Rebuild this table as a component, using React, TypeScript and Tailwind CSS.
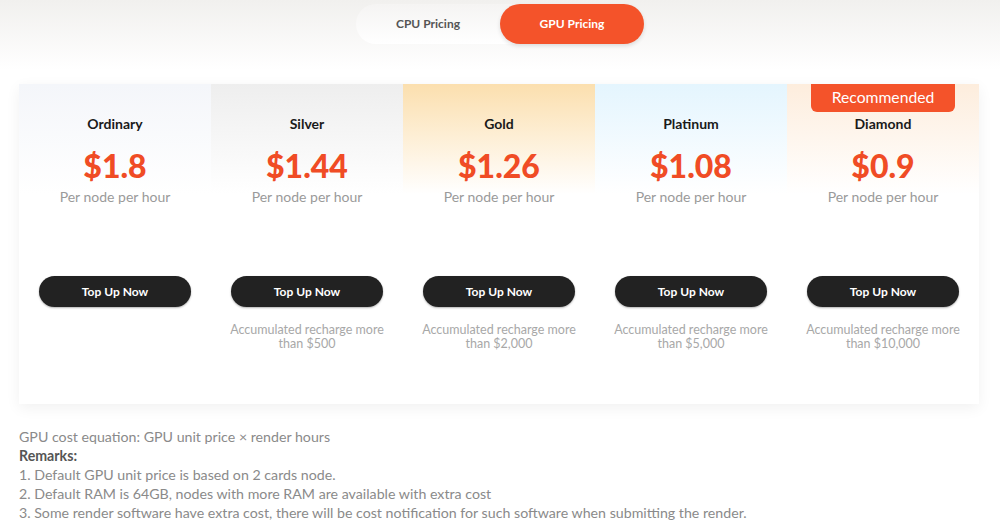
import React from "react";

const tiers = [
  { name: "Ordinary", price: "$1.8", bg: "bg-gradient-to-b from-[#f4f6fa] to-white", note: null },
  { name: "Silver", price: "$1.44", bg: "bg-gradient-to-b from-[#eeeeee] to-white", note: "than $500" },
  { name: "Gold", price: "$1.26", bg: "bg-gradient-to-b from-[#fbdfae] to-white", note: "than $2,000" },
  { name: "Platinum", price: "$1.08", bg: "bg-gradient-to-b from-[#e4f5fe] to-white", note: "than $5,000" },
  { name: "Diamond", price: "$0.9", bg: "bg-gradient-to-b from-[#fdeddd] to-white", note: "than $10,000", rec: true },
];

export default function App() {
  return (
    <div
      className="w-[1000px] h-[528px] overflow-hidden bg-white relative"
      style={{ fontFamily: "Lato, 'Noto Sans', sans-serif" }}
    >
      <div className="bg-gradient-to-b from-[#f1f0ee] to-white h-[70px] absolute top-0 left-0 right-0" />
      <div className="relative flex justify-center pt-[4px]">
        <div className="flex w-[288px] h-[40px] rounded-full bg-gradient-to-b from-[#f5f4f3] to-white">
          <div className="w-[144px] flex items-center justify-center text-[12px] font-bold text-[#555]">
            CPU Pricing
          </div>
          <div className="w-[144px] flex items-center justify-center rounded-full bg-[#f4532a] text-[12px] font-bold text-white shadow-[0_2px_4px_rgba(0,0,0,0.12)]">
            GPU Pricing
          </div>
        </div>
      </div>

      <div className="relative mt-[40px] ml-[19px] w-[960px] h-[320px] bg-white shadow-[0_4px_14px_rgba(0,0,0,0.06)] grid grid-cols-5">
        {tiers.map((t) => (
          <div key={t.name} className="relative flex flex-col items-center">
            <div className={`absolute top-0 left-0 right-0 h-[110px] ${t.bg}`} />
            {t.rec && (
              <div className="absolute top-0 left-[24px] w-[144px] h-[28px] rounded-b-[6px] bg-[#f4532a] text-white text-[15.7px] flex items-center justify-center">
                Recommended
              </div>
            )}
            <div className="relative mt-[30px] text-[14px] font-bold text-[#1a1a1a] leading-[20px]">
              {t.name}
            </div>
            <div className="relative mt-[14px] text-[32px] font-black text-[#f04c25] leading-[36px]">
              {t.price}
            </div>
            <div className="relative mt-[3px] text-[14px] text-[#9a9a9a] leading-[20px]">
              Per node per hour
            </div>
            <button className="relative mt-[69px] w-[152px] h-[31px] rounded-full bg-[#222222] text-white text-[12px] font-bold shadow-[0_1px_2px_rgba(0,0,0,0.3)]">
              Top Up Now
            </button>
            {t.note && (
              <div className="relative mt-[16px] text-[12.5px] text-[#a8a8a8] text-center leading-[14px]">
                Accumulated recharge more
                <br />
                {t.note}
              </div>
            )}
          </div>
        ))}
      </div>

      <div className="relative ml-[19px] mt-[23px] text-[14.2px] leading-[19px] text-[#8a8a8a]">
        <div>GPU cost equation: GPU unit price × render hours</div>
        <div className="font-bold text-[#555]">Remarks:</div>
        <div>1. Default GPU unit price is based on 2 cards node.</div>
        <div>2. Default RAM is 64GB, nodes with more RAM are available with extra cost</div>
        <div>3. Some render software have extra cost, there will be cost notification for such software when submitting the render.</div>
      </div>
    </div>
  );
}
